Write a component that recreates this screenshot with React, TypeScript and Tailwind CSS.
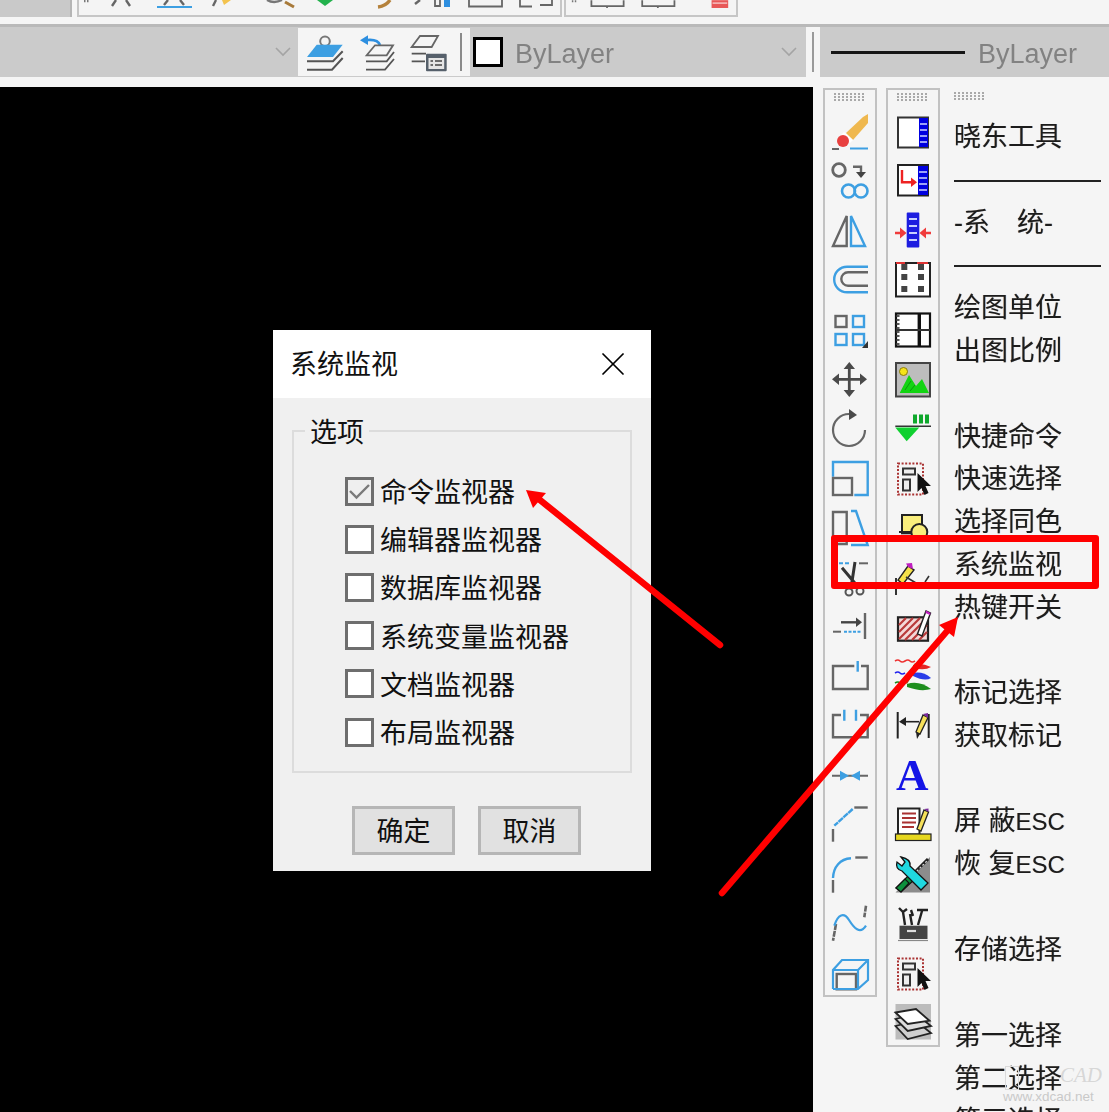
import type { ReactNode } from "react";
import { X } from "lucide-react";

const GRAY = "#666666";
const BLUE = "#3d9fe2";

function Ico({ children }: { children: ReactNode }) {
  return (
    <svg viewBox="0 0 36 36" className="h-9 w-9 overflow-visible blur-[0.4px]" fill="none" strokeWidth={2}>
      {children}
    </svg>
  );
}

function Grip() {
  return (
    <svg width="32" height="8" className="opacity-70">
      {[0, 1, 2].map((r) =>
        [0, 1, 2, 3, 4, 5, 6, 7].map((c) => (
          <rect key={`${r}${c}`} x={c * 4} y={r * 3} width="2" height="2" fill="#8a8a8a" />
        ))
      )}
    </svg>
  );
}

const SelectIcon = (
  <Ico>
    <rect x="3" y="2.5" width="25" height="31" stroke="#a33" strokeWidth="2" strokeDasharray="2 1.6" />
    <rect x="8" y="7.5" width="12" height="6" stroke="#333" fill="#eee" />
    <rect x="8" y="18.5" width="7" height="11" stroke="#333" fill="#eee" />
    <path d="M22.5 12 L36 25 H30.5 L33.5 32 L29.5 34 L26.5 27 L22.5 31z" fill="#111" />
  </Ico>
);

const leftIcons: ReactNode[] = [
  <Ico>
    <path d="M14 19 L31 3 L36 0 V9 L21 26z" fill="#efb84f" />
    <path d="M12 18 L21 26 L18 29 L9 21z" fill="#fff" />
    <circle cx="11" cy="27" r="6" fill="#e8403f" />
    <path d="M0 35H7" stroke={GRAY} />
    <path d="M18 34.5H36" stroke={BLUE} />
  </Ico>,
  <Ico>
    <circle cx="7" cy="7" r="6.3" stroke={GRAY} strokeWidth="2.8" />
    <path d="M21 3.7H29V10" stroke={GRAY} strokeWidth="2.4" />
    <path d="M24 9H34L29 15z" fill="#444" />
    <circle cx="16.5" cy="28" r="6.5" stroke={BLUE} strokeWidth="2.6" />
    <circle cx="29" cy="28" r="6.5" stroke={BLUE} strokeWidth="2.6" />
  </Ico>,
  <Ico>
    <path d="M14.7 3V33H1z" stroke={GRAY} strokeWidth="2.4" />
    <path d="M19 3V33H33z" stroke={BLUE} strokeWidth="2.4" />
  </Ico>,
  <Ico>
    <path d="M36 4.7H15a12.8 12.8 0 0 0 0 25.6H36" stroke={BLUE} strokeWidth="2.4" />
    <path d="M36 10.3H16a6.7 6.7 0 0 0 0 13.4H36" stroke={GRAY} strokeWidth="2.4" />
  </Ico>,
  <Ico>
    <rect x="3.5" y="4" width="11" height="11" stroke={GRAY} strokeWidth="2.4" />
    <rect x="21" y="4" width="11" height="11" stroke={BLUE} strokeWidth="2.4" />
    <rect x="3.5" y="22" width="11" height="11" stroke={BLUE} strokeWidth="2.4" />
    <rect x="21" y="22" width="11" height="11" stroke={BLUE} strokeWidth="2.4" />
    <path d="M36 29V36H30z" fill="#333" />
  </Ico>,
  <Ico>
    <path d="M17.3 5V30M5 17.3H30" stroke="#4a4a4a" strokeWidth="2.8" />
    <path d="M17.3 0L23 7H11.6zM17.3 35L11.6 28H23zM0 17.3L7 11.6V23zM35 17.3L28 23V11.6z" fill="#4a4a4a" />
  </Ico>,
  <Ico>
    <path d="M33 19A16 16 0 1 1 17 3" stroke={GRAY} strokeWidth="2.2" />
    <path d="M17 -2L25 4L17 9z" fill="#4a4a4a" />
  </Ico>,
  <Ico>
    <path d="M1 15.7V1H35.7V34H22.3" stroke={BLUE} strokeWidth="2.4" />
    <rect x="1" y="17" width="19" height="17" stroke={GRAY} strokeWidth="2.4" />
  </Ico>,
  <Ico>
    <path d="M1 34V2H14.7V34H1" stroke={GRAY} strokeWidth="2.4" />
    <path d="M19 1H24L35.7 35H19" stroke={BLUE} strokeWidth="2.4" />
  </Ico>,
  <Ico>
    <path d="M7 3.3H19" stroke={BLUE} strokeDasharray="4 2" />
    <path d="M27 3.3H36" stroke={GRAY} />
    <path d="M10 7.7L27 28M23 2L19 28" stroke="#333" strokeWidth="3" />
    <circle cx="17" cy="32" r="3.5" stroke="#555" />
    <circle cx="28" cy="31" r="3.5" stroke="#555" />
  </Ico>,
  <Ico>
    <path d="M33 4V30" stroke={GRAY} strokeWidth="2.4" />
    <path d="M9 13.3H25" stroke="#444" strokeWidth="2.4" />
    <path d="M24 8.5L30 13.3L24 18z" fill="#444" />
    <path d="M1 22.7H9" stroke={GRAY} />
    <path d="M12 22.7H29" stroke={BLUE} strokeDasharray="3 1.5" />
  </Ico>,
  <Ico>
    <path d="M22.3 7H1V30H35.7V7H29" stroke={GRAY} strokeWidth="2.4" />
    <path d="M25.7 2V12.7" stroke={BLUE} strokeWidth="2.4" />
  </Ico>,
  <Ico>
    <path d="M9 7H1V29.3H35.7V7H28" stroke={GRAY} strokeWidth="2.4" />
    <path d="M12.3 1.7V12.7M24 1.7V12.7" stroke={BLUE} strokeWidth="2.4" />
  </Ico>,
  <Ico>
    <path d="M0 17.7H36" stroke={GRAY} />
    <path d="M8 12.7V22.7L17 17.7zM28 12.7V22.7L19 17.7z" fill={BLUE} />
  </Ico>,
  <Ico>
    <path d="M22.3 0.5H35.7" stroke={GRAY} strokeWidth="2.4" />
    <path d="M20.7 2L2.3 18.7" stroke={BLUE} strokeWidth="2.4" strokeDasharray="6 0.6" />
    <path d="M1 22V34.7" stroke={GRAY} strokeWidth="2.4" />
  </Ico>,
  <Ico>
    <path d="M23.3 0.5H35.7" stroke={GRAY} strokeWidth="2.4" />
    <path d="M19 1.3C8 2 1.5 10 1 21" stroke={BLUE} strokeWidth="2.4" />
    <path d="M1 23V35.7" stroke={GRAY} strokeWidth="2.4" />
  </Ico>,
  <Ico>
    <path d="M34 -0.3L32.3 11.3M4 18L1 34.7" stroke={GRAY} strokeWidth="2.6" strokeDasharray="6 1" />
    <path d="M2.3 19.7C6 8 12 6 17 14S28 29 34 19.7" stroke={BLUE} strokeWidth="2.2" />
  </Ico>,
  <Ico>
    <rect x="4.7" y="18" width="19.3" height="15.3" stroke={GRAY} strokeWidth="2.4" />
    <path d="M1 33V14L10 4H36V24L26 33H1M1 14H26V33M26 14L36 4" stroke={BLUE} strokeWidth="2.2" />
  </Ico>,
];

const rightIcons: ReactNode[] = [
  <Ico>
    <rect x="3" y="3.5" width="30" height="30" fill="#fff" stroke="#333" />
    <rect x="24" y="4" width="9" height="29" fill="#0000e0" />
    <path d="M25 10H32M25 16H32M25 22H32M25 28H32" stroke="#cfd6ff" strokeWidth="1.6" />
  </Ico>,
  <Ico>
    <rect x="3" y="2" width="30" height="30.5" fill="#fff" stroke="#222" />
    <rect x="23" y="3" width="10" height="29" fill="#0000e0" />
    <path d="M24 9H32M24 15H32M24 21H32M24 27H32" stroke="#cfd6ff" strokeWidth="1.6" />
    <path d="M7 7V19.3H18" stroke="#ee2222" strokeWidth="2.4" />
    <path d="M16 14.5L22 19.3L16 24z" fill="#ee2222" />
  </Ico>,
  <Ico>
    <rect x="11.7" y="-0.5" width="12.6" height="35" rx="1" fill="#1d1de0" />
    <path d="M14 6H22M14 13H22M14 20H22M14 27H22" stroke="#c8d0ff" strokeWidth="2" />
    <path d="M0 20H7M29 20H36" stroke="#f03c3c" strokeWidth="2.4" />
    <path d="M11.5 20L5 14.5V25.5zM24.5 20L31 14.5V25.5z" fill="#f03c3c" />
  </Ico>,
  <Ico>
    <rect x="1" y="1" width="34" height="33.5" fill="#fff" stroke="#222" strokeWidth="2" />
    <path d="M1 1H10M22 1H33" stroke="#d33" />
    {[9.3, 26].map((x) =>
      [5, 15, 27].map((y) => <rect key={`${x}${y}`} x={x - 3} y={y - 3} width="6" height="6" fill="#444" />)
    )}
  </Ico>,
  <Ico>
    <rect x="1" y="1.5" width="34" height="33" fill="#fff" stroke="#111" strokeWidth="2.2" />
    <path d="M24.3 1.5V34.5" stroke="#111" strokeWidth="3.4" />
    <path d="M1 18H35" stroke="#333" strokeWidth="2.2" />
    <path d="M3 3V34" stroke="#555" strokeWidth="3" strokeDasharray="2 2" />
  </Ico>,
  <Ico>
    <rect x="1" y="1" width="34" height="33.5" fill="#bdbdbd" stroke="#444" strokeWidth="2" />
    <path d="M4.7 31L14 13L21 24L27 17L34 31z" fill="#12d412" />
    <path d="M10 28L16 19M15 29L20 23" stroke="#0a9a0a" strokeWidth="1" />
    <circle cx="8.5" cy="9.5" r="4" fill="#f5e31a" stroke="#8a7a10" strokeWidth="1" />
  </Ico>,
  <Ico>
    <path d="M0.3 16.5H24.3L11.7 30.3z" fill="#10d030" />
    <path d="M0.3 15.3H36" stroke="#333" strokeWidth="1.4" />
    <path d="M18 3.5h4v9h-4zM24 3.5h4v9h-4zM30 3.5h4v9h-4z" fill="#0fa82c" />
  </Ico>,
  SelectIcon,
  <Ico>
    <rect x="7" y="5" width="20" height="18.3" fill="#f9ee7c" stroke="#222" />
    <circle cx="24.3" cy="22" r="8" fill="#f9ee7c" stroke="#222" />
    <path d="M4 22H16" stroke="#222" />
  </Ico>,
  <Ico>
    <path d="M1 18V35" stroke="#333" strokeWidth="2" />
    <path d="M13 6L19 10L8 24L3 20z" fill="#f5e24a" stroke="#222" strokeWidth="1.4" />
    <path d="M11 3.5L17 3L18 9L13 7z" fill="#c01fc0" />
    <path d="M11 17L21 23M30 22L34 16" stroke="#333" strokeWidth="1.6" />
  </Ico>,
  <Ico>
    <rect x="3" y="8.3" width="30" height="23.4" fill="#f3d9d9" stroke="#222" strokeWidth="2.2" />
    <path d="M4 16L11 9M4 23L18 9M4 30L25 9M10 31L32 9M17 31L32 16M24 31L32 23" stroke="#b93a3a" strokeWidth="2.2" />
    <path d="M31 2L35.5 4L27 27L22.5 25z" fill="#fff" stroke="#222" strokeWidth="1.4" />
    <path d="M31 1.5L35.5 4L35 6L30.5 4z" fill="#c01fc0" />
  </Ico>,
  <Ico>
    <path d="M0 2Q3 0 5 2T10 2T15 2T20 2" stroke="#e33" strokeWidth="1.6" />
    <path d="M18 6Q26 3 36 8Q30 12 18 9z" fill="#e52525" />
    <path d="M0 14Q3 12 5 14T10 14" stroke="#22e" strokeWidth="1.6" />
    <path d="M18 14Q28 12 36 19Q30 23 18 17z" fill="#2a3de8" />
    <path d="M0 24Q3 22 5 24T10 24" stroke="#1a8a1a" strokeWidth="1.6" />
    <path d="M12 25Q24 21 36 30Q26 33 12 28z" fill="#1e8e1e" />
    <path d="M9 22L20 4L24 6L12 25z" fill="#8a6a1a" />
  </Ico>,
  <Ico>
    <path d="M2.7 4V30.5M33.7 6V30" stroke="#222" strokeWidth="2" />
    <path d="M10 13.7H24" stroke="#222" strokeWidth="1.6" />
    <path d="M4 13.7L11 9V18z" fill="#222" />
    <path d="M28 7L33 9.5L25 26L21 24z" fill="#f6e05a" stroke="#222" strokeWidth="1.3" />
    <path d="M28 6L33 5L33 10z" fill="#7a2a9a" />
    <path d="M21 24L25 26L22 31z" fill="#222" />
  </Ico>,
  <Ico>
    <text x="1" y="32" fontFamily="'Liberation Serif', serif" fontWeight="700" fontSize="45" fill="#1414e6" stroke="none">
      A
    </text>
  </Ico>,
  <Ico>
    <rect x="3" y="1.5" width="21.5" height="26" fill="#fff" stroke="#222" strokeWidth="2" />
    <path d="M7 6.5H21M7 11H21M7 15.5H21M7 20H19" stroke="#a33" strokeWidth="2" />
    <path d="M29 3L33.5 5L26 24L22 22z" fill="#f6e05a" stroke="#222" strokeWidth="1.3" />
    <path d="M29 2L33.5 1.5L33.5 5z" fill="#7a2a9a" />
    <rect x="0.5" y="27" width="35.5" height="6.5" fill="#e6d71f" stroke="#222" strokeWidth="1.2" />
  </Ico>,
  <Ico>
    <path d="M35 0V35.5H0.5z" fill="#8c8c8c" />
    <path d="M18 17L33 2" stroke="#222" strokeWidth="3" />
    <path d="M19 17L33 3" stroke="#ddd" strokeWidth="1.2" strokeDasharray="2 2" />
    <path d="M1 31L15 17L20 22L6 35z" fill="#0c8f3c" stroke="#111" strokeWidth="1.2" />
    <path d="M6 0L10 5L7 9L2 5Q0 12 7 14L26 33L33 26L15 9Q16 2 6 0z" fill="#1fd8e0" stroke="#111" strokeWidth="1.3" />
    <path d="M1 31L10 22L14 26L6 35z" fill="#0c8f3c" stroke="#111" strokeWidth="1.2" />
  </Ico>,
  <Ico>
    <path d="M4.5 19.7H32.5V33H4.5z" fill="#444" />
    <path d="M12 25H21" stroke="#ddd" strokeWidth="2.2" />
    <path d="M3 34.5H33" stroke="#888" strokeWidth="1.2" />
    <path d="M10 19L8 6M4 2L8 6L12 3M17 19L15 8M16 4L18 10M23 19L27 5M22 4H33" stroke="#222" strokeWidth="2.4" />
  </Ico>,
  SelectIcon,
  <Ico>
    <rect x="0.5" y="-1" width="35.5" height="35.5" fill="#bcbcbc" />
    <path d="M0.5 21L21 16L36 28L12.7 34z" fill="#cfcfcf" stroke="#222" strokeWidth="1.8" />
    <path d="M0.5 14L21 9L36 21L12.7 26z" fill="#dcdcdc" stroke="#222" strokeWidth="1.8" />
    <path d="M0.5 7.5L21 4L34.5 15.7L12.7 19z" fill="#fff" stroke="#222" strokeWidth="1.8" />
  </Ico>,
];

type MenuRow = string | "line" | null;

const menuRows: MenuRow[] = [
  "晓东工具", "line", "-系　统-", "line", "绘图单位", "出图比例", null,
  "快捷命令", "快速选择", "选择同色", "系统监视", "热键开关", null,
  "标记选择", "获取标记", null, "屏 蔽ESC", "恢 复ESC", null,
  "存储选择", null, "第一选择", "第二选择", "第三选择",
];

function MenuText({ label }: { label: string }) {
  const esc = label.endsWith("ESC");
  return (
    <span className="pt-[4px] text-[27px] leading-[30px] whitespace-pre text-[#1c1c1c] blur-[0.3px] [text-shadow:-0.6px_0_0_rgba(230,130,30,0.35),0.6px_0_0_rgba(30,120,230,0.35)]">
      {esc ? label.slice(0, -3) : label}
      {esc && <span className="text-[24px]">ESC</span>}
    </span>
  );
}

function Toolbar({ icons }: { icons: ReactNode[] }) {
  return (
    <div className="flex h-fit w-[54px] flex-col items-center border-2 border-[#c2c2c2]">
      <div className="flex h-[17.2px] items-start pt-[3px]">
        <Grip />
      </div>
      <div className="-mb-[3px]">
        {icons.map((icon, i) => (
          <div key={i} className="flex h-[49.53px] items-center justify-center">
            {icon}
          </div>
        ))}
      </div>
    </div>
  );
}

function Chevron() {
  return (
    <svg width="16" height="10" viewBox="0 0 16 10" fill="none" stroke="#a4a4a4" strokeWidth="1.6">
      <path d="M1 1L8 8L15 1" />
    </svg>
  );
}

function TopStrip() {
  return (
    <div className="flex h-[24px] shrink-0 items-start bg-[#f5f5f5]">
      <div className="h-[17px] w-[72px] border-r-2 border-[#b5b5b5] bg-[#c9c9c9]" />
      <svg viewBox="77 0 483 15" className="ml-[5px] h-[17px] w-[485px] border-x-2 border-b-2 border-[#c6c6c6] bg-[#f4f4f4] blur-[0.5px]" fill="none" strokeWidth="2.4" preserveAspectRatio="xMinYMin slice">
        <path d="M82 1h6" stroke="#777" strokeDasharray="1.5 1.5" />
        <path d="M110 6L114 0M128 6L124 0" stroke="#666" />
        <path d="M162 5L166 0M182 5L178 0" stroke="#666" />
        <path d="M155 7H190" stroke={BLUE} strokeWidth="2" />
        <path d="M211 6L214 0" stroke="#666" />
        <path d="M222 5L229 0H220z" fill="#f3c34e" />
        <path d="M265 0Q272 4 280 0" stroke="#777" />
        <path d="M283 2L292 7" stroke="#a87a3a" strokeWidth="3" />
        <path d="M315 0H331L323 6z" fill="#22b14c" />
        <path d="M376 7Q384 6 388 0" stroke="#b5823c" strokeWidth="3.4" />
        <path d="M413 4L418 0" stroke="#666" />
        <path d="M433 0V6H438V0" stroke="#666" strokeWidth="1.8" />
        <rect x="442" y="0" width="6" height="7" fill="#2e8fe0" />
        <path d="M467 0V6.5H500V0" stroke="#666" strokeWidth="1.8" />
        <path d="M518 0V6.5H530" stroke="#666" strokeWidth="1.8" />
        <path d="M538 5H550V0" stroke="#666" strokeWidth="1.8" />
      </svg>
      <svg viewBox="564 0 174 15" className="ml-[2px] h-[17px] w-[174px] border-x-2 border-b-2 border-[#c6c6c6] bg-[#f4f4f4] blur-[0.5px]" fill="none" strokeWidth="1.8">
        <path d="M570 1h6" stroke="#777" strokeWidth="2" strokeDasharray="1.5 1.5" />
        <path d="M590 0V6H623V0M606 6V8" stroke="#666" />
        <path d="M642 0V6H675V0M658 6V8" stroke="#666" />
        <rect x="713" y="0" width="17" height="8" fill="#e85858" />
        <path d="M714 3H729" stroke="#f8c8c8" strokeWidth="1.4" />
      </svg>
    </div>
  );
}

function LayerBar() {
  return (
    <div className="flex h-[53px] shrink-0 items-center border-t-[3px] border-[#b9b9b9] bg-[#cbcbcb]">
      <div className="flex w-[298px] justify-end pr-[7px]">
        <Chevron />
      </div>
      <div className="flex h-[48px] w-[172px] items-center bg-[#f5f5f5] pl-[9px]">
        <div className="flex w-[153px] gap-[17px]">
          <Ico>
            <circle cx="18" cy="7.3" r="4.8" stroke="#777" strokeWidth="2" />
            <path d="M0 23L9.7 10.7H35.7L26 23z" fill={BLUE} />
            <path d="M0 27.3H26L35.7 17.3M0 35.7H25L35.7 24" stroke="#555" strokeWidth="2" />
          </Ico>
          <Ico>
            <path d="M0 6.3L8 1.3V11z" fill="#2e8fe0" />
            <path d="M7 6Q18 5 20 11" stroke="#2e8fe0" strokeWidth="2.6" />
            <path d="M6.7 21.3L15 11.3H33L26.7 21.3z" stroke="#666" strokeWidth="1.8" />
            <path d="M6 27.3H26.7L34 18M6 35.7H25L34 25" stroke="#555" strokeWidth="1.8" />
          </Ico>
          <Ico>
            <path d="M-1.3 13L7 2H25L18.7 13z" stroke="#666" strokeWidth="1.8" />
            <path d="M-1.3 19.7H13M-1.3 27.3H12" stroke="#555" strokeWidth="1.8" />
            <rect x="13" y="19.7" width="20.7" height="17.6" rx="1" fill="#56606b" />
            <rect x="15.5" y="24" width="15.7" height="11" fill="#e5e5e5" />
            <path d="M17.5 27H20M22 27H29M17.5 31H20M22 31H29" stroke="#444" strokeWidth="1.4" />
          </Ico>
        </div>
        <div className="h-[38px] w-[2px] bg-[#8a8a8a]" />
      </div>
      <div className="flex h-full w-[336px] items-center pl-[3px]">
        <div className="h-[30px] w-[30px] border-[3px] border-black bg-white" />
        <span className="ml-[12px] flex-1 pt-[4px] text-[27px] text-[#828282] blur-[0.3px]">ByLayer</span>
        <div className="pr-[9px]">
          <Chevron />
        </div>
      </div>
      <div className="flex h-full w-[14px] items-center justify-center bg-[#f5f5f5]">
        <div className="h-[40px] w-[2px] bg-[#9a9a9a]" />
      </div>
      <div className="ml-[11px] mt-[1px] h-[2.5px] w-[134px] bg-[#151515]" />
      <span className="ml-[13px] pt-[4px] text-[27px] text-[#828282] blur-[0.3px]">ByLayer</span>
    </div>
  );
}

const monitorOptions = ["命令监视器", "编辑器监视器", "数据库监视器", "系统变量监视器", "文档监视器", "布局监视器"];

function Dialog() {
  return (
    <div className="absolute left-[273px] top-[243px] h-[541px] w-[378px] bg-[#f0f0f0] text-[27px] leading-[30px] text-[#111]">
      <div className="flex h-[68px] items-center justify-between bg-white pl-[17px] pr-[18px]">
        <span className="pt-[2px]">系统监视</span>
        <X size={40} strokeWidth={1.05} className="text-black" />
      </div>
      <fieldset className="mx-[19px] mt-[17px] h-[358px] border-2 border-[#dcdcdc]">
        <legend className="ml-[11px] px-[5px] pt-[4px] leading-[28px]">选项</legend>
        <div className="pl-[51px] pt-[20px]">
          {monitorOptions.map((opt, i) => (
            <div key={opt} className="flex h-[48.2px] items-center gap-[6px]">
              <div className={`flex h-[29px] w-[29px] items-center justify-center border-[3px] border-[#6e6e6e] ${i === 0 ? "bg-[#efefef]" : "bg-white"}`}>
                {i === 0 && (
                  <svg width="21" height="17" viewBox="0 0 21 17" fill="none" stroke="#7a7a7a" strokeWidth="2.4">
                    <path d="M1 8L7.5 14.5L20 2" />
                  </svg>
                )}
              </div>
              <span className="pt-[4px]">{opt}</span>
            </div>
          ))}
        </div>
      </fieldset>
      <div className="mt-[33px] flex gap-[23px] pl-[79px]">
        {["确定", "取消"].map((t) => (
          <div key={t} className="flex h-[49px] w-[103px] items-center justify-center border-[3px] border-[#b6b6b6] bg-[#e1e1e1] pt-[3px]">
            {t}
          </div>
        ))}
      </div>
    </div>
  );
}

function Overlays() {
  return (
    <>
      <div className="absolute left-[831px] top-[535px] h-[54px] w-[268px] rounded-[3px] border-[7px] border-[#ff0000]" />
      <svg className="absolute inset-0 h-full w-full" viewBox="0 0 1109 1112" fill="none">
        <path d="M720 645L535 496" stroke="#ff0000" strokeWidth="6.5" strokeLinecap="round" />
        <path d="M526 490L546 493L533 508z" fill="#ff0000" />
        <path d="M722 893L948 630" stroke="#ff0000" strokeWidth="6.5" strokeLinecap="round" />
        <path d="M958 617L954 637L939 625z" fill="#ff0000" />
      </svg>
      <div className="absolute left-[1003px] top-[1089px] text-[13.5px] leading-[16px] text-[#c9c9c9]">www.xdcad.net</div>
      <div className="absolute left-[1060px] top-[1063px] font-['Liberation_Serif',serif] text-[21px] italic leading-[24px] text-[#cfcfcf]/80">CAD</div>
      <div className="absolute left-[1005px] top-[1066px] h-[24px] w-[14px] border border-[#dadada]" />
    </>
  );
}

export default function App() {
  return (
    <div className="relative flex h-[1112px] w-[1109px] flex-col overflow-hidden bg-[#f5f5f5] font-['Liberation_Sans','Noto_Sans_CJK_SC',sans-serif]">
      <TopStrip />
      <LayerBar />
      <div className="h-[10px] shrink-0" />
      <div className="flex min-h-0 flex-1">
        <div className="relative w-[813px] bg-black">
          <Dialog />
        </div>
        <div className="flex flex-1 pl-[10px] pt-[1px]">
          <Toolbar icons={leftIcons} />
          <div className="ml-[9px]">
            <Toolbar icons={rightIcons} />
          </div>
          <div className="ml-[14px] flex-1 pr-[8px]">
            <div className="flex h-[25.6px] items-start pt-[4px]">
              <Grip />
            </div>
            {menuRows.map((row, i) => (
              <div key={i} className="flex h-[42.8px] items-center">
                {row === "line" ? (
                  <div className="mt-[6px] h-[2px] w-full bg-[#222]" />
                ) : row ? (
                  <MenuText label={row} />
                ) : null}
              </div>
            ))}
          </div>
        </div>
      </div>
      <Overlays />
    </div>
  );
}
